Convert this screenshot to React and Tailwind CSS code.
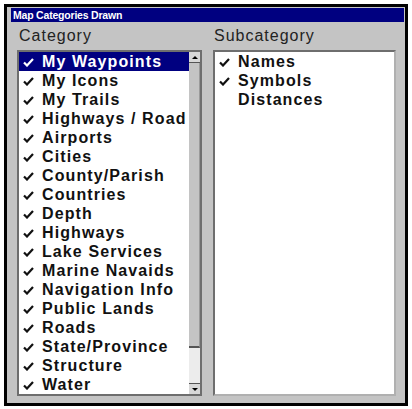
import React from 'react';

const categories = [
  'My Waypoints',
  'My Icons',
  'My Trails',
  'Highways / Road',
  'Airports',
  'Cities',
  'County/Parish',
  'Countries',
  'Depth',
  'Highways',
  'Lake Services',
  'Marine Navaids',
  'Navigation Info',
  'Public Lands',
  'Roads',
  'State/Province',
  'Structure',
  'Water',
];

const subcategories = [
  { name: 'Names', checked: true },
  { name: 'Symbols', checked: true },
  { name: 'Distances', checked: false },
];

// Small tick drawn before each enabled item
const Check = ({ color = '#111' }) => (
  <svg width="11" height="9" viewBox="0 0 11 9" className="shrink-0">
    <path d="M1 4.5 L4 7.5 L10 1" fill="none" stroke={color} strokeWidth="2.2" />
  </svg>
);

const Row = ({ label, checked = true, selected = false }) => (
  <div
    className={`flex items-start h-[19px] leading-[19px] whitespace-nowrap ${
      selected ? 'bg-[#000080] text-white' : 'text-[#111]'
    }`}
  >
    <div className="w-[23px] pl-[4px] pt-[6px] shrink-0">
      {checked && <Check color={selected ? '#fff' : '#111'} />}
    </div>
    <span className="font-bold text-[16px] tracking-[1.1px]">{label}</span>
  </div>
);

const ScrollBar = () => (
  <div className="w-[11px] shrink-0 flex flex-col bg-[#c8c8c8]">
    <div className="h-[11px] flex items-center justify-center bg-[#d8d8d8] border-b border-[#555]">
      <div className="w-0 h-0 border-l-[3px] border-r-[3px] border-b-[3px] border-l-transparent border-r-transparent border-b-black" />
    </div>
    <div className="flex-1 bg-[#c4c4c4] border-r border-[#9a9a9a] border-b-2 border-b-[#555]" />
    <div className="h-[35px] bg-[#ececec]" />
    <div className="h-[11px] flex items-center justify-center bg-[#d8d8d8] border-t border-[#555]">
      <div className="w-0 h-0 border-l-[3px] border-r-[3px] border-t-[3px] border-l-transparent border-r-transparent border-t-black" />
    </div>
  </div>
);

export default function App() {
  return (
    <div className="w-[412px] h-[409px] bg-white pt-[4px] pl-[4px] font-['Liberation_Sans',Arial,sans-serif]">
      <div className="w-[404px] h-[402px] border-[3px] border-black bg-[#c4c4c4] flex flex-col">
        {/* Title bar */}
        <div className="ml-[4px] mr-[1px] mt-[1px] h-[14px] bg-[#000080] flex items-center pl-[2px]">
          <span className="text-white font-bold text-[10.5px] leading-none tracking-[-0.2px]">
            Map Categories Drawn
          </span>
        </div>

        <div className="flex pl-[10px] gap-[11px]">
          {/* Category column */}
          <div className="w-[185px] flex flex-col">
            <div className="mt-[4px] h-[20px] leading-[20px] pl-[2px] text-[16px] tracking-[1px] text-[#222]">
              Category
            </div>
            <div className="mt-[4px] h-[346px] border-2 border-[#6e6e6e] bg-white flex overflow-hidden">
              <div className="flex-1 overflow-hidden">
                {categories.map((c, i) => (
                  <Row key={c} label={c} selected={i === 0} />
                ))}
              </div>
              <ScrollBar />
            </div>
          </div>

          {/* Subcategory column */}
          <div className="w-[183px] flex flex-col">
            <div className="mt-[4px] h-[20px] leading-[20px] pl-[1px] text-[16px] tracking-[1px] text-[#222]">
              Subcategory
            </div>
            <div className="mt-[4px] h-[346px] border-2 border-t-[#6e6e6e] border-l-[#6e6e6e] border-r-[#b0b0b0] border-b-[#b0b0b0] bg-white overflow-hidden">
              {subcategories.map((s) => (
                <Row key={s.name} label={s.name} checked={s.checked} />
              ))}
            </div>
          </div>
        </div>
      </div>
    </div>
  );
}
